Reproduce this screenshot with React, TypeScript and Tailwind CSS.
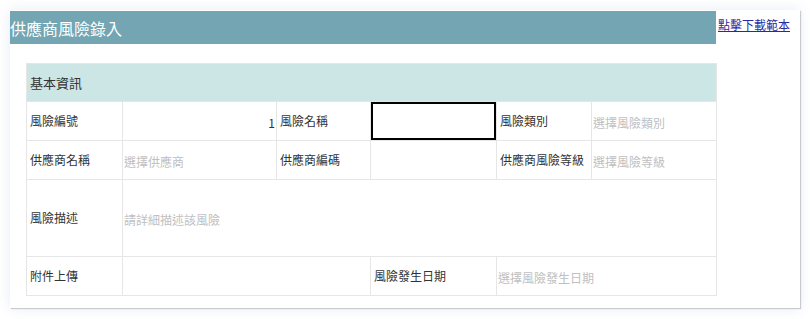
import React from "react";

const cell = "border border-[#e6e6e6] p-0 align-middle";
const label = "px-[3px] text-[12px] text-[#333]";
const field =
  "w-full h-full bg-transparent outline-none text-[12px] text-[#333] placeholder:text-[#c0c0c0] px-px";

export default function App() {
  return (
    <div
      className="min-h-[319px] bg-white pt-2.5 pl-2.5"
      style={{ fontFamily: '"Noto Sans CJK TC", "Noto Sans", sans-serif' }}
    >
      <div className="w-[790px] h-[298px] bg-white shadow-[1px_1px_1px_#c9cbd0,0_0_12px_rgba(90,110,190,0.14)] flex pt-px">
        {/* left column */}
        <div className="w-[706px] flex flex-col">
          <div className="h-[33px] bg-[#73a5b2] flex items-center">
            <h1 className="text-[16px] text-white leading-none">供應商風險錄入</h1>
          </div>
          <div className="pl-4 pt-[19px]">
            <table className="w-[690px] table-fixed border-collapse">
              <colgroup>
                <col className="w-[96px]" />
                <col className="w-[154px]" />
                <col className="w-[94px]" />
                <col className="w-[126px]" />
                <col className="w-[95px]" />
                <col className="w-[125px]" />
              </colgroup>
              <tbody>
                <tr className="h-[38px]">
                  <td colSpan={6} className={`${cell} bg-[#cce5e5] px-[3px] text-[13px] text-[#333]`}>
                    基本資訊
                  </td>
                </tr>
                <tr className="h-[39px]">
                  <td className={`${cell} ${label}`}>風險編號</td>
                  <td className={cell}>
                    <input className={`${field} text-right`} defaultValue="1" />
                  </td>
                  <td className={`${cell} ${label}`}>風險名稱</td>
                  <td className={`${cell} relative`}>
                    <input className="absolute inset-0 w-full h-full border-2 border-black outline-none text-[12px] px-1" />
                  </td>
                  <td className={`${cell} ${label}`}>風險類別</td>
                  <td className={cell}>
                    <input className={field} placeholder="選擇風險類別" />
                  </td>
                </tr>
                <tr className="h-[39px]">
                  <td className={`${cell} ${label}`}>供應商名稱</td>
                  <td className={cell}>
                    <input className={field} placeholder="選擇供應商" />
                  </td>
                  <td className={`${cell} ${label}`}>供應商編碼</td>
                  <td className={cell}>
                    <input className={field} />
                  </td>
                  <td className={`${cell} ${label}`}>供應商風險等級</td>
                  <td className={cell}>
                    <input className={field} placeholder="選擇風險等級" />
                  </td>
                </tr>
                <tr className="h-[77px]">
                  <td className={`${cell} ${label}`}>風險描述</td>
                  <td colSpan={5} className={cell}>
                    <input className={field} placeholder="請詳細描述該風險" />
                  </td>
                </tr>
                <tr className="h-[39px]">
                  <td className={`${cell} ${label}`}>附件上傳</td>
                  <td colSpan={2} className={cell}></td>
                  <td className={`${cell} ${label}`}>風險發生日期</td>
                  <td colSpan={2} className={cell}>
                    <input className={field} placeholder="選擇風險發生日期" />
                  </td>
                </tr>
              </tbody>
            </table>
          </div>
        </div>
        {/* right column */}
        <div className="pl-0.5 pt-[8px] leading-none">
          <a href="#" className="block text-[12px] leading-none text-[#2a2aa0] underline">
            點擊下載範本
          </a>
        </div>
      </div>
    </div>
  );
}
